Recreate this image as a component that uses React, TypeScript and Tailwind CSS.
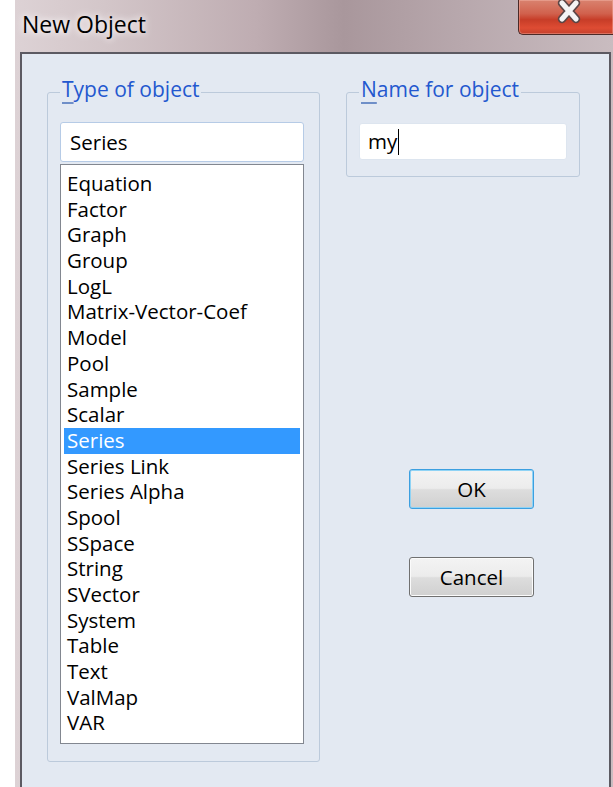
import React from "react";

const TYPES = [
  "Equation",
  "Factor",
  "Graph",
  "Group",
  "LogL",
  "Matrix-Vector-Coef",
  "Model",
  "Pool",
  "Sample",
  "Scalar",
  "Series",
  "Series Link",
  "Series Alpha",
  "Spool",
  "SSpace",
  "String",
  "SVector",
  "System",
  "Table",
  "Text",
  "ValMap",
  "VAR",
];

const FONT = "font-['Open_Sans','Noto_Sans',sans-serif]";

function CloseGlyph() {
  return (
    <svg width="32" height="26" viewBox="0 0 32 26" className="block">
      <path d="M9 3 L23 19 M23 3 L9 19" stroke="#5b4646" strokeWidth="8.5" strokeLinecap="round" />
      <path d="M9 3 L23 19 M23 3 L9 19" stroke="#f4f4f4" strokeWidth="5" strokeLinecap="round" />
    </svg>
  );
}

function Legend({ first, rest }: { first: string; rest: string }) {
  return (
    <span className="absolute left-[12px] top-[-17px] bg-[#e3e9f2] px-[2px] text-[21px] leading-[26px] text-[#2358cf]">
      <span className="underline decoration-[#6f8fc8] underline-offset-[5px]">{first}</span>
      {rest}
    </span>
  );
}

function DialogButton({ label, focused }: { label: string; focused?: boolean }) {
  return (
    <button
      className={
        "ml-[63px] flex h-[40px] w-[125px] items-center justify-center rounded-[3px] border text-[20.5px] text-black bg-[linear-gradient(to_bottom,#f3f3f3_0%,#ececec_48%,#dddddd_52%,#d0d0d0_100%)] " +
        (focused
          ? "border-[#3c9fe0] shadow-[inset_0_0_0_1px_#8fd3f5]"
          : "border-[#707070] shadow-[inset_0_0_0_1px_#fbfbfb]")
      }
    >
      {label}
    </button>
  );
}

export default function App() {
  return (
    <div className={"flex h-[787px] w-[613px] overflow-hidden bg-white " + FONT}>
      <div className="w-[15px] shrink-0 bg-white" />
      <div className="flex flex-1 flex-col bg-[linear-gradient(90deg,#ddd2d5_0%,#d3c6c9_15%,#bfadb2_40%,#a9979c_55%,#b8a8ad_75%,#c9bcc0_100%)]">
        {/* caption bar */}
        <div className="flex h-[52px] shrink-0 items-start">
          <div className="pl-[7px] pt-[10px] text-[23px] leading-[28px] text-black [text-shadow:0_0_6px_#ffffff,0_0_10px_#f4eef0]">
            New Object
          </div>
          <div className="ml-auto flex h-[35px] w-[95px] items-start justify-start rounded-bl-[5px] border-b border-l border-[#4b2a27] bg-[linear-gradient(to_bottom,#d9826f_0%,#d1614d_40%,#c73d28_58%,#de4c33_82%,#c4412d_100%)] pl-[34px] shadow-[inset_0_0_0_1px_rgba(255,200,190,0.35)]">
            <CloseGlyph />
          </div>
        </div>
        {/* client area */}
        <div className="ml-[5px] mr-[2px] flex flex-1 border-l-2 border-r-2 border-t-2 border-[#5c5a62] bg-[#e3e9f2]">
          <div className="flex pl-[25px] pt-[38px]">
            <div className="relative flex h-[670px] w-[273px] flex-col rounded-[3px] border border-[#bccadb] px-[12px] pt-[29px]">
              <Legend first="T" rest="ype of object" />
              <div className="flex h-[40px] w-[244px] items-center rounded-[3px] border border-[#b6cbe6] bg-white pl-[9px] text-[20.5px] text-black">
                Series
              </div>
              <div className="mt-[2px] h-[580px] w-[244px] border border-[#828790] bg-white px-[3px] pt-[6px]">
                {TYPES.map((t) => (
                  <div
                    key={t}
                    className={
                      "h-[25.7px] whitespace-nowrap pl-[3px] text-[20.5px] leading-[25.7px] " +
                      (t === "Series" ? "bg-[#3399ff] text-white" : "text-black")
                    }
                  >
                    {t}
                  </div>
                ))}
              </div>
            </div>
            <div className="ml-[26px] flex w-[234px] flex-col">
              <div className="relative h-[85px] rounded-[3px] border border-[#bccadb] px-[12px] pt-[30px]">
                <Legend first="N" rest="ame for object" />
                <div className="flex h-[37px] items-center rounded-[3px] border border-[#dde5ef] bg-white pl-[8px] text-[20.5px] text-black">
                  my
                  <span className="ml-[1px] h-[26px] w-[1px] bg-black" />
                </div>
              </div>
              <div className="mt-[292px]">
                <DialogButton label="OK" focused />
              </div>
              <div className="mt-[48px]">
                <DialogButton label="Cancel" />
              </div>
            </div>
          </div>
        </div>
      </div>
    </div>
  );
}
